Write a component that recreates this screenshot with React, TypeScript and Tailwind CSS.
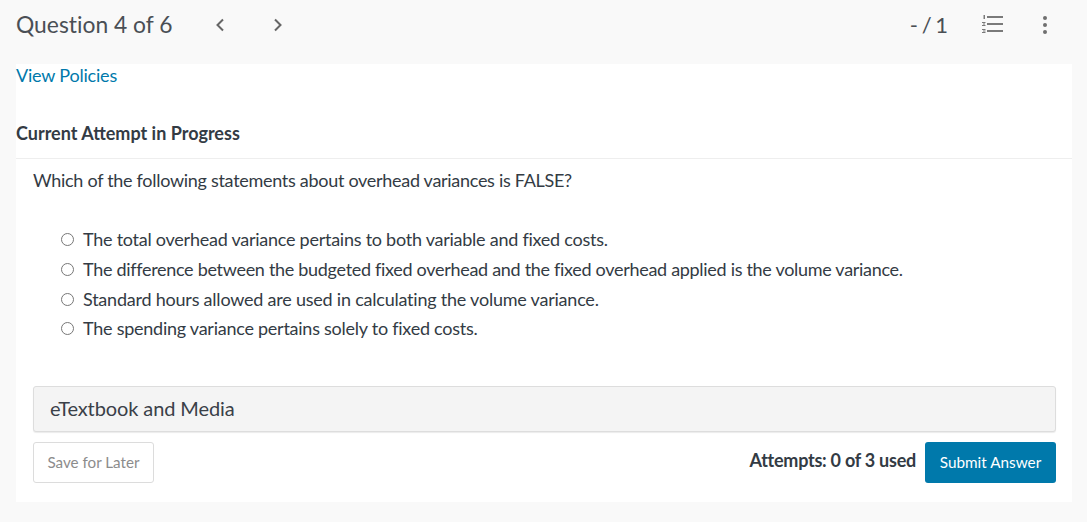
const options = [
  { text: 'The total overhead variance pertains to both variable and fixed costs.', tracking: 'tracking-[-0.25px]' },
  {
    text: 'The difference between the budgeted fixed overhead and the fixed overhead applied is the volume variance.',
    tracking: 'tracking-[-0.3px]',
  },
  { text: 'Standard hours allowed are used in calculating the volume variance.', tracking: 'tracking-[-0.22px]' },
  { text: 'The spending variance pertains solely to fixed costs.', tracking: 'tracking-[-0.25px]' },
]

function ChevronLeft() {
  return (
    <svg width="10" height="14" viewBox="0 0 10 14" fill="none" stroke="#666" strokeWidth="2">
      <path d="M8 1.5 2.5 7 8 12.5" />
    </svg>
  )
}

function ChevronRight() {
  return (
    <svg width="10" height="14" viewBox="0 0 10 14" fill="none" stroke="#666" strokeWidth="2">
      <path d="M2 1.5 7.5 7 2 12.5" />
    </svg>
  )
}

function ListIcon() {
  return (
    <svg width="21" height="20" viewBox="0 0 21 20" fill="#7a7a7a">
      <rect x="5" y="1" width="16" height="2" />
      <rect x="5" y="8" width="16" height="2" />
      <rect x="5" y="15" width="16" height="2" />
      <rect x="1.5" y="0" width="1.5" height="4" />
      <rect x="0" y="7" width="3.5" height="1" />
      <rect x="0" y="10" width="3.5" height="1" />
      <rect x="1" y="8.5" width="2" height="1" />
      <rect x="0" y="14" width="3.5" height="1" />
      <rect x="1" y="15.5" width="2.5" height="1" />
      <rect x="0" y="17" width="3.5" height="1" />
    </svg>
  )
}

export default function App() {
  return (
    <div className="h-[522px] w-[1087px] overflow-hidden bg-[#f9f9f9] font-['Lato',sans-serif] text-[#333b44]">
      {/* Header */}
      <div className="flex h-16 items-start pl-4 pr-[40px] pt-[11px]">
        <h1 className="w-[199px] text-[22.85px] leading-[26px] text-[#4a4f55] [font-variant-ligatures:none]">
          Question 4 of 6
        </h1>
        <button className="flex h-7 w-[12px] items-center">
          <ChevronLeft />
        </button>
        <button className="ml-[46px] flex h-7 w-[12px] items-center">
          <ChevronRight />
        </button>
        <div className="ml-auto flex items-center">
          <span className="text-[22px] leading-[28px] tracking-[-1px] text-[#4a4f55]">- / 1</span>
          <span className="ml-[35px] flex h-7 items-center">
            <ListIcon />
          </span>
          <span className="ml-[40px] flex h-7 flex-col items-center justify-center gap-[3px]">
            <span className="h-1 w-1 rounded-full bg-[#707070]" />
            <span className="h-1 w-1 rounded-full bg-[#707070]" />
            <span className="h-1 w-1 rounded-full bg-[#707070]" />
          </span>
        </div>
      </div>

      {/* Main panel */}
      <div className="ml-4 h-[438px] w-[1056px] bg-white">
        <a href="#" className="block text-[18px] leading-[22px] tracking-[-0.2px] text-[#0079ab]">
          View Policies
        </a>
        <div className="mt-[36px] border-b border-[#eeeeee] pb-[14px] text-[18px] font-bold leading-[22px]">
          Current Attempt in Progress
        </div>

        <div className="pl-[17px] pr-4">
          <p className="mt-[10px] text-[18px] leading-[22px] tracking-[-0.29px]">
            Which of the following statements about overhead variances is FALSE?
          </p>

          <ul className="mt-[34.15px] pl-[28px]">
            {options.map((option) => (
              <li key={option.text} className={`flex h-[29.6px] items-center text-[18px] ${option.tracking}`}>
                <span className="mr-[9px] h-[13px] w-[13px] rounded-full border-[1.5px] border-[#777777] bg-white" />
                {option.text}
              </li>
            ))}
          </ul>

          <div className="mt-[42.85px] flex h-[46px] items-center rounded-[3px] border border-[#dddddd] bg-[#f4f4f4] pb-[2px] pl-4 text-[20px] tracking-[-0.1px] text-[#3a4048] shadow-[0_1px_1px_rgba(0,0,0,0.08)]">
            eTextbook and Media
          </div>

          <div className="mt-[10px] flex items-start justify-between">
            <button className="h-[41px] w-[121px] rounded-[3px] border border-[#dcdcdc] bg-white text-[15.2px] text-[#8c8c8c]">
              Save for Later
            </button>
            <div className="flex items-start">
              <span className="mr-[9px] pt-[5px] text-[18px] font-bold leading-[26px] tracking-[-0.25px]">
                Attempts: 0 of 3 used
              </span>
              <button className="h-[41px] w-[131px] rounded-[3px] bg-[#0079ab] text-[15.3px] text-white">
                Submit Answer
              </button>
            </div>
          </div>
        </div>
      </div>
    </div>
  )
}
